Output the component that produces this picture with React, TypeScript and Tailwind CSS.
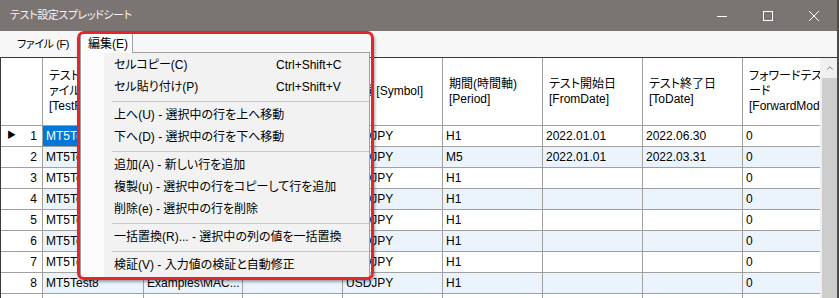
import { ChevronUp } from "lucide-react";

const ui = "font-['Liberation_Sans','Noto_Sans_CJK_JP',sans-serif] [font-feature-settings:'palt']";

const headers: string[][] = [
  [],
  ["テストフ", "ァイル", "[TestFile]"],
  ["エキスパート", "[Expert]"],
  ["パラメータ", "[Param]"],
  ["通貨 [Symbol]"],
  ["期間(時間軸)", "[Period]"],
  ["テスト開始日", "[FromDate]"],
  ["テスト終了日", "[ToDate]"],
  ["フォワードテス", "ード", "[ForwardMode]"],
];

const rows = Array.from({ length: 9 }, (_, i) => [
  `MT5Test${i + 1}`,
  "Examples\\MAC...",
  "",
  "USDJPY",
  i === 1 ? "M5" : "H1",
  i < 2 ? "2022.01.01" : "",
  i === 0 ? "2022.06.30" : i === 1 ? "2022.03.31" : "",
  "0",
]);

type MenuEntry = { label: string; shortcut?: string } | "sep";

const menuItems: MenuEntry[] = [
  { label: "セルコピー(C)", shortcut: "Ctrl+Shift+C" },
  { label: "セル貼り付け(P)", shortcut: "Ctrl+Shift+V" },
  "sep",
  { label: "上へ(U) - 選択中の行を上へ移動" },
  { label: "下へ(D) - 選択中の行を下へ移動" },
  "sep",
  { label: "追加(A) - 新しい行を追加" },
  { label: "複製(u) - 選択中の行をコピーして行を追加" },
  { label: "削除(e) - 選択中の行を削除" },
  "sep",
  { label: "一括置換(R)... - 選択中の列の値を一括置換" },
  "sep",
  { label: "検証(V) - 入力値の検証と自動修正" },
];

function TitleBar() {
  return (
    <div className="flex h-[31px] items-center bg-[#7a7472] text-[#f4f4f4]">
      <span className="flex-1 pl-[10px] text-[11px] tracking-[-0.4px]">テスト設定スプレッドシート</span>
      <div className="flex h-full">
        <div className="flex w-[46px] items-center justify-center">
          <svg width="10" height="10" viewBox="0 0 10 10">
            <path d="M0 5.5h10" stroke="#fff" strokeWidth="1" />
          </svg>
        </div>
        <div className="flex w-[46px] items-center justify-center">
          <svg width="10" height="10" viewBox="0 0 10 10">
            <rect x="0.5" y="0.5" width="9" height="9" fill="none" stroke="#fff" strokeWidth="1" />
          </svg>
        </div>
        <div className="flex w-[46px] items-center justify-center">
          <svg width="10" height="10" viewBox="0 0 10 10">
            <path d="M0 0L10 10M10 0L0 10" stroke="#fff" strokeWidth="1" />
          </svg>
        </div>
      </div>
    </div>
  );
}

function MenuBar() {
  return (
    <div className="flex h-[26px] items-center bg-[#f7f7f7] text-black">
      <span className="pl-[17px] text-[11px] tracking-[-0.4px]">ファイル (F)</span>
    </div>
  );
}

function Grid() {
  const cols = "grid grid-cols-[42px_101px_99px_100px_100px_100px_100px_100px_77px]";
  return (
    <div className="flex min-h-0 flex-1 border-t border-[#3a3a3a]">
      <div className="flex-1 overflow-hidden border-l border-[#3a3a3a] text-[12px] text-black">
        <div className={cols}>
          {headers.map((lines, c) => (
            <div
              key={c}
              className={`flex h-[68px] flex-col justify-center overflow-hidden border-b border-[#a0a0a0] bg-white pl-[6px] leading-[15px] ${
                c < 8 ? "border-r" : ""
              }`}
            >
              {lines.map((l) => (
                <span key={l} className="whitespace-nowrap">
                  {l}
                </span>
              ))}
            </div>
          ))}
        </div>
        {rows.map((r, i) => (
          <div key={i} className={cols}>
            <div className="flex h-[21px] items-center border-r border-b border-[#a0a0a0] bg-white pr-[5px]">
              <span className="w-[14px] pl-[6px] text-[9px]">{i === 0 ? "▶" : ""}</span>
              <span className="flex-1 text-right">{i + 1}</span>
            </div>
            {r.map((v, c) => {
              const selected = i === 0 && c === 0;
              const bg = selected ? "bg-[#0078d7] text-white" : i % 2 === 1 ? "bg-[#ebf4fc]" : "bg-white";
              return (
                <div
                  key={c}
                  className={`h-[21px] overflow-hidden whitespace-nowrap border-b border-[#a0a0a0] pl-[3px] leading-[20px] ${bg} ${
                    c < 7 ? "border-r" : ""
                  }`}
                >
                  {v}
                </div>
              );
            })}
          </div>
        ))}
      </div>
      <div className="flex w-[17px] flex-col bg-[#f0f0f0] pl-[2px]">
        <div className="flex h-[20px] items-center justify-center">
          <ChevronUp size={10} strokeWidth={2} color="#606060" />
        </div>
        <div className="flex-1 bg-[#cdcdcd]" />
      </div>
    </div>
  );
}

function EditMenu() {
  return (
    <>
      <div className="absolute left-[80px] top-[33px] z-20 flex h-[20px] w-[53px] items-center border-x border-t border-[#a0a0a0] bg-[#fcfcfc] pl-[7px] text-[12px] text-black">
        編集(E)
      </div>
      <div className="absolute left-[80px] top-[52px] z-10 flex h-[227px] w-[290px] border border-[#a0a0a0] bg-[#f2f2f2] text-[12px] text-black">
        <div className="w-[23px] bg-[#fcfcfc]" />
        <div className="flex flex-1 flex-col pt-[1px]">
          {menuItems.map((m, i) =>
            m === "sep" ? (
              <div key={i} className="flex h-[6px] items-center pl-[8px]">
                <div className="h-px flex-1 bg-[#c8c8c8]" />
              </div>
            ) : (
              <div key={i} className="flex h-[22px] items-center pl-[10px]">
                <span className={`whitespace-nowrap ${m.shortcut ? "w-[162px]" : ""}`}>{m.label}</span>
                {m.shortcut && <span className="whitespace-nowrap">{m.shortcut}</span>}
              </div>
            )
          )}
        </div>
      </div>
      <div className="absolute left-[77px] top-[31px] z-30 h-[249px] w-[297px] rounded-[7px] border-[3px] border-[#e2262b] shadow-[1px_2px_3px_rgba(0,0,0,0.35)]" />
    </>
  );
}

export default function App() {
  return (
    <div className={`relative flex h-[298px] w-[839px] flex-col overflow-hidden border-r-2 border-[#4a4a4a] bg-white ${ui}`}>
      <TitleBar />
      <MenuBar />
      <Grid />
      <EditMenu />
    </div>
  );
}
